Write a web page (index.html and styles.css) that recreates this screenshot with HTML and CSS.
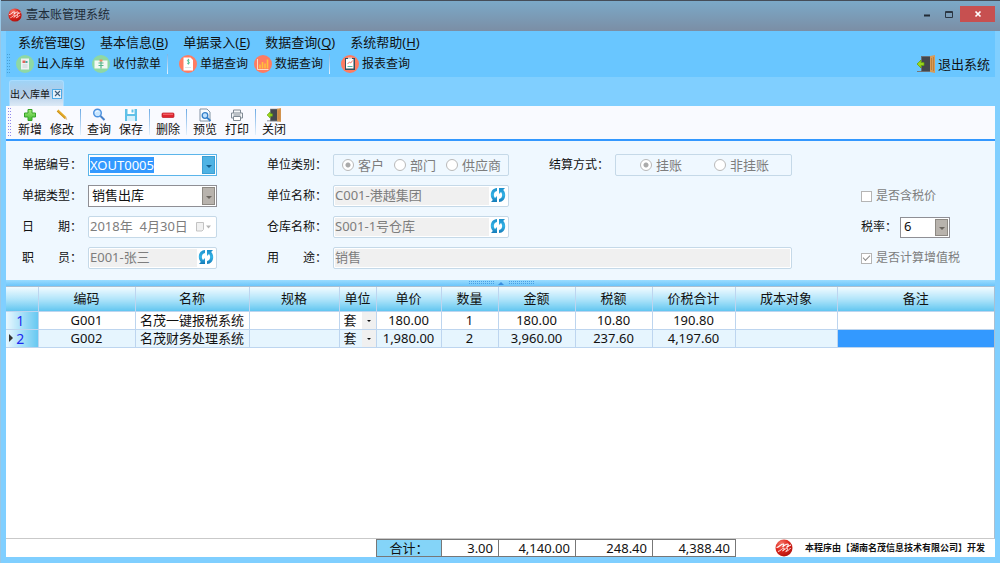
FILE: index.html
```html
<!DOCTYPE html>
<html lang="zh-CN">
<head>
<meta charset="utf-8">
<title>壹本账管理系统</title>
<link rel="stylesheet" href="styles.css">
</head>
<body>
<svg class="defs" aria-hidden="true">
  <defs>
    <radialGradient id="g-red" cx=".35" cy=".25" r=".8"><stop offset="0" stop-color="#f4786a"/><stop offset=".5" stop-color="#e02a20"/><stop offset="1" stop-color="#b0100c"/></radialGradient>
    <linearGradient id="g-blue" x1="0" y1="0" x2="0" y2="1"><stop offset="0" stop-color="#1c8fcb"/><stop offset=".5" stop-color="#35b4e6"/><stop offset="1" stop-color="#147ab8"/></linearGradient>
    <linearGradient id="g-green" x1="0" y1="0" x2="0" y2="1"><stop offset="0" stop-color="#a6ea7c"/><stop offset="1" stop-color="#3fba2e"/></linearGradient>
    <symbol id="i-logo" viewBox="0 0 18 18">
      <circle cx="9" cy="9" r="8.500" fill="url(#g-red)"/>
      <path d="M1.500 8.500C4 8.500 6 4.500 8.500 5c.8.500 0 2-1 3C10 6 12 4.500 13 5.200c.8.800-.500 2.300-1.500 3.300 1.500-1 3-2 4.500-2.500" fill="none" stroke="#fff" stroke-width="1.100"/>
      <path d="M3 12.500c2.500-.5 4.500-3.500 6-3.500.8.500-.500 2-1.500 3 2-1.500 4-3 5-2.500.8.800-.800 2.300-1.800 3 2-.5 3.800-2 5-3.500" fill="none" stroke="#ffe3df" stroke-width="1"/>
    </symbol>
    <symbol id="i-door" viewBox="0 0 18 18">
      <path d="M0 16.500h16" stroke="#777" stroke-width="1"/>
      <path d="M4 1h10v16H4z" fill="#6a6f74"/><path d="M5 2h8v14H5z" fill="#43474d"/>
      <path d="M13 1l5-1v18l-5-1z" fill="#d99b57"/><path d="M14.500 3v12M16.500 2v14" stroke="#b97834" stroke-width=".8"/>
      <path d="M0 9l4-4v2.500h3v3H4V13z" fill="#9bd51a" stroke="#5f9d0a" stroke-width=".7"/>
    </symbol>
    <symbol id="i-refresh" viewBox="0 0 16 16">
      <path d="M7 1C3.200 1.300.8 4 .8 7.800c0 2 .7 3.800 2 5.200L1 15h6V9L5 11c-.8-.9-1.100-2-1.100-3.200C3.900 5.800 5 4.500 7 4z" fill="url(#g-blue)"/>
      <path d="M9 15c3.800-.3 6.200-3 6.200-6.800 0-2-.7-3.800-2-5.200L15 1H9v6l2-2c.8.900 1.100 2 1.100 3.200 0 2-1.100 3.300-3.100 3.800z" fill="url(#g-blue)"/>
    </symbol>
  </defs>
</svg>
<div class="window">
  <header class="titlebar">
    <svg class="title-logo"><use href="#i-logo"/></svg>
    <h1 class="title">壹本账管理系统</h1>
    <div class="window-buttons">
      <button class="win-btn" type="button" aria-label="最小化"><svg width="8" height="8"><path d="M1 5.500h6" stroke="#222b35" stroke-width="2"/></svg></button>
      <button class="win-btn" type="button" aria-label="最大化"><svg width="8" height="7"><path d="M.5 .5h7v6h-7zM.5 1.500h7" fill="none" stroke="#2c3743"/></svg></button>
      <button class="win-btn win-close" type="button" aria-label="关闭窗口"><svg width="8" height="8"><path d="M1.500 1.500l5 5M6.500 1.500l-5 5" stroke="#fff" stroke-width="1.700"/></svg></button>
    </div>
  </header>

  <div class="frame">
    <div class="top">
      <nav class="menu">
        <button type="button">系统管理(<u>S</u>)</button>
        <button type="button">基本信息(<u>B</u>)</button>
        <button type="button">单据录入(<u>E</u>)</button>
        <button type="button">数据查询(<u>Q</u>)</button>
        <button type="button">系统帮助(<u>H</u>)</button>
      </nav>
      <div class="shortcuts">
        <span class="grip"></span>
        <button type="button"><svg viewBox="0 0 18 18"><circle cx="9" cy="9" r="9" fill="#8ed8a4"/><path d="M5 3.500h8v11H5z" fill="#eef1f2"/><path d="M6.500 5.500h3v2.500h-3z" fill="#e0665a"/><path d="M9.500 6h2v2h-2z" fill="#4aa7a0"/><path d="M6.500 10h5M6.500 12h5" stroke="#c9d2d4"/></svg>出入库单</button>
        <button type="button"><svg viewBox="0 0 18 18"><circle cx="9" cy="9" r="9" fill="#8ed8a4"/><path d="M2.500 5.500h13v8h-13z" fill="#f5f8f4"/><path d="M9 5v8.500" stroke="#39a97a"/><path d="M6.500 8h5M6.500 10.500h5" stroke="#58b68b"/><path d="M7.500 4.500h3v2h-3z" fill="#ef8b65"/></svg>收付款单</button>
        <span class="divider"></span>
        <button type="button"><svg viewBox="0 0 18 18"><circle cx="9" cy="9" r="9" fill="#ff7c62"/><path d="M4.500 2.500h7l2.500 2.500v10.500H4.500z" fill="#fff"/><path d="M10.500 5.200C10 4.400 8.300 4.500 8.400 5.700c.1 1 2.100.8 2.100 2S8.600 9 8 8M9.400 3.800v5.700" fill="none" stroke="#3bb98e" stroke-width=".8"/><path d="M6 12.500h6" stroke="#dfe4e8"/></svg>单据查询</button>
        <button type="button"><svg viewBox="0 0 18 18"><circle cx="9" cy="9" r="9" fill="#ff7c62"/><path d="M3.500 4v10.500h11" fill="none" stroke="#ffd9c2"/><path d="M6 13.500V9.500M8.500 13.500V7M11 13.500V8.500M13.500 13.500V4.500" stroke="#ffc13b" stroke-width="1.600"/></svg>数据查询</button>
        <span class="divider"></span>
        <button type="button"><svg viewBox="0 0 18 18"><circle cx="9" cy="9" r="9" fill="#ff7c62"/><path d="M4 3h10v12H4z" fill="#35505f"/><path d="M5 4h7.500v9.500H5z" fill="#fff"/><path d="M7 2.500h4v1.500H7z" fill="#d5dce0"/><path d="M6.500 9l2-2 1.200 1 2-2.500" fill="none" stroke="#ef6a5a" stroke-width=".9"/><path d="M6.500 11.500h5" stroke="#54b7a5"/></svg>报表查询</button>
        <button class="exit" type="button"><svg><use href="#i-door"/></svg>退出系统</button>
      </div>
    </div>

    <div class="tabs">
      <div class="tab"><span>出入库单</span><button type="button" aria-label="关闭标签"><svg width="7" height="7"><path d="M1 1l5 5M6 1L1 6" stroke="#3c5a78" stroke-width="1.100"/></svg></button></div>
    </div>

    <div class="toolbar">
      <span class="grip grip-violet"></span>
      <button type="button"><svg viewBox="0 0 14 14"><path d="M5 1.500h4V5h3.500v4H9v3.500H5V9H1.500V5H5z" fill="url(#g-green)" stroke="#36a429" stroke-linejoin="round"/></svg>新增</button>
      <button type="button"><svg viewBox="0 0 14 14"><path d="M2.500 2.500l8 7.500" stroke="#e3aa28" stroke-width="2.400"/><path d="M2.200 3.200l7.800 7.300" stroke="#b77d17" stroke-width=".6"/><path d="M9.700 10.800l1.600-1.700 1 3z" fill="#d9b889"/></svg>修改</button>
      <span class="divider"></span>
      <button type="button"><svg viewBox="0 0 14 14"><circle cx="5.500" cy="5" r="3.800" fill="#c8e6ff" stroke="#4c91df" stroke-width="1.400"/><path d="M8.500 8l4 4" stroke="#4781c9" stroke-width="2"/><path d="M3.500 4.500c.5-1.500 2-1.800 3-1.200" fill="none" stroke="#fff"/></svg>查询</button>
      <button type="button"><svg viewBox="0 0 14 14"><path d="M1 1h12v12H1z" fill="#60c1e8"/><path d="M3.500 1h7v5h-7z" fill="#fff"/><path d="M7.500 1.500h2v3h-2z" fill="#60c1e8"/><path d="M3 8h8v5H3z" fill="#d5f0fb"/></svg>保存</button>
      <span class="divider"></span>
      <button type="button"><svg viewBox="0 0 14 14"><rect x="1" y="5" width="12" height="4.500" rx="1" fill="#df2730" stroke="#bb1822" stroke-width=".7"/><path d="M2 6.200h10" stroke="#fa777b"/></svg>删除</button>
      <span class="divider"></span>
      <button type="button"><svg viewBox="0 0 14 14"><path d="M2 1h7l3 3v9H2z" fill="#f7fbff" stroke="#8293a4"/><circle cx="7" cy="7.500" r="2.800" fill="#c0e2ff" stroke="#347fc8" stroke-width="1.300"/><path d="M9 9.500l3.500 3.500" stroke="#347fc8" stroke-width="1.800"/></svg>预览</button>
      <button type="button"><svg viewBox="0 0 14 14"><path d="M3.500 5V2h7v3M3.500 10h-2V5h11v5h-2" fill="#f4f6f8" stroke="#808a94"/><path d="M3.500 8.500h7v4h-7zM3.500 7h7" fill="#fff" stroke="#808a94"/></svg>打印</button>
      <span class="divider"></span>
      <button type="button"><svg><use href="#i-door"/></svg>关闭</button>
    </div>

    <form class="form">
      <label class="label c1 r1" for="no">单据编号：</label>
      <div class="combo combo-active c2 r1"><input id="no" class="selected-text" type="text" value="XOUT0005"></div>
      <label class="label c1 r2" for="type">单据类型：</label>
      <div class="combo c2 r2"><select id="type"><option>销售出库</option></select></div>
      <label class="label c1 r3" for="date">日　　期：</label>
      <div class="date c2 r3"><input id="date" type="text" value="2018年  4月30日" disabled><svg width="17" height="10"><path d="M1.500 .5h7v7l-1.500 1.500h-5.500z" fill="#f1f1f1" stroke="#c3c3c3"/><path d="M11 3.500h5l-2.500 3z" fill="#b5b5b5"/></svg></div>
      <label class="label c1 r4" for="staff">职　　员：</label>
      <div class="lookup c2 r4"><input id="staff" type="text" value="E001-张三" disabled><button type="button" aria-label="刷新职员"><svg><use href="#i-refresh"/></svg></button></div>

      <span class="label c4 r1" id="kind-label">单位类别：</span>
      <div class="radios c5 r1" role="radiogroup" aria-labelledby="kind-label">
        <label><input type="radio" name="kind" checked disabled>客户</label>
        <label><input type="radio" name="kind" disabled>部门</label>
        <label><input type="radio" name="kind" disabled>供应商</label>
      </div>
      <label class="label c4 r2" for="unit">单位名称：</label>
      <div class="lookup c5 r2"><input id="unit" type="text" value="C001-港越集团" disabled><button type="button" aria-label="刷新单位"><svg><use href="#i-refresh"/></svg></button></div>
      <label class="label c4 r3" for="store">仓库名称：</label>
      <div class="lookup c5 r3"><input id="store" type="text" value="S001-1号仓库" disabled><button type="button" aria-label="刷新仓库"><svg><use href="#i-refresh"/></svg></button></div>
      <label class="label c4 r4" for="use">用　　途：</label>
      <div class="lookup wide r4"><input id="use" type="text" value="销售" disabled></div>

      <span class="label c7 r1" id="pay-label">结算方式：</span>
      <div class="radios radios-pay c8 r1" role="radiogroup" aria-labelledby="pay-label">
        <label><input type="radio" name="pay" checked disabled>挂账</label>
        <label><input type="radio" name="pay" disabled>非挂账</label>
      </div>

      <label class="check c10 r2"><input type="checkbox" disabled>是否含税价</label>
      <div class="rate c10 r3"><label for="rate">税率：</label><div class="combo"><select id="rate"><option>6</option></select></div></div>
      <label class="check c10 r4"><input type="checkbox" checked disabled>是否计算增值税</label>
    </form>

    <div class="splitter"><i></i><b></b><i></i></div>

    <main class="grid">
      <table class="items">
        <colgroup><col class="w-row"><col class="w-code"><col class="w-name"><col class="w-spec"><col class="w-unit"><col class="w-price"><col class="w-qty"><col class="w-sum"><col class="w-tax"><col class="w-total"><col class="w-cost"><col></colgroup>
        <thead><tr><th></th><th>编码</th><th>名称</th><th>规格</th><th>单位</th><th>单价</th><th>数量</th><th>金额</th><th>税额</th><th>价税合计</th><th>成本对象</th><th>备注</th></tr></thead>
        <tbody>
          <tr><th scope="row">1</th><td>G001</td><td>名茂一键报税系统</td><td></td><td><div class="unit"><select aria-label="单位"><option>套</option></select></div></td><td>180.00</td><td>1</td><td>180.00</td><td>10.80</td><td>190.80</td><td></td><td></td></tr>
          <tr class="current"><th scope="row">2</th><td>G002</td><td>名茂财务处理系统</td><td></td><td><div class="unit"><select aria-label="单位"><option>套</option></select></div></td><td>1,980.00</td><td>2</td><td>3,960.00</td><td>237.60</td><td>4,197.60</td><td></td><td class="active-cell"></td></tr>
        </tbody>
      </table>
    </main>

    <footer class="footer">
      <div class="totals">
        <span class="total-label">合计：</span><output class="t-qty">3.00</output><output class="t-sum">4,140.00</output><output class="t-tax">248.40</output><output class="t-total">4,388.40</output>
      </div>
      <div class="credit"><svg><use href="#i-logo"/></svg><span>本程序由【湖南名茂信息技术有限公司】开发</span></div>
    </footer>
  </div>
</div>
</body>
</html>
```
FILE: styles.css
```css
* { box-sizing: border-box; }

body {
  margin: 0;
  font: 12px/16px "Noto Sans", "Noto Sans CJK SC", sans-serif;
  color: #111;
}

button, input, select {
  margin: 0;
  padding: 0;
  border: 0;
  background: none;
  font: inherit;
  color: inherit;
}

svg { display: block; flex: none; }
.defs { position: absolute; width: 0; height: 0; }

.window {
  display: flex;
  flex-direction: column;
  min-height: 100vh;
  background: #80cfff;
  border-left: 1px solid #98c7e6;
}

/* Title bar */
.titlebar {
  display: flex;
  align-items: center;
  height: 31px;
  padding: 0 0 2px 7px;
  border-top: 1px solid #454d58;
  background: linear-gradient(#7ba9c8, #7b8ea5);
}
.title-logo { width: 14px; height: 14px; }
.title { flex: 1; margin: 0 0 0 4px; font-size: 12px; font-weight: 400; color: #202c38; }
.window-buttons { display: flex; align-self: flex-start; margin: 5px 5px 0 0; }
.win-btn { display: grid; place-items: center; width: 22px; height: 16px; }
.win-close { width: 35px; background: #c75050; }

.frame {
  flex: 1;
  display: flex;
  flex-direction: column;
  padding: 0 5px 6px;
}

/* Menu and shortcuts */
.top { background: #69c6ff; padding-top: 2px; }
.menu { display: flex; gap: 15px; padding-left: 12px; font-size: 13px; line-height: 18px; }
.menu u { text-underline-offset: 2px; }
.shortcuts { display: flex; align-items: center; gap: 6px; height: 26px; }
.shortcuts button { display: flex; align-items: center; gap: 3px; white-space: nowrap; }
.shortcuts svg { width: 18px; height: 18px; }
.shortcuts .divider { margin-right: 5px; }
.shortcuts .grip + button { margin-right: 1px; }
.shortcuts .exit { margin-left: auto; margin-right: 5px; font-size: 13px; }
.grip {
  width: 4px;
  height: 20px;
  background: conic-gradient(#4a9fd4 25%, transparent 0) 0 0 / 2px 3px;
}
.divider {
  width: 1px;
  height: 20px;
  background: linear-gradient(#7fb4e4, #e3f2ff);
}

/* Tabs */
.tabs { display: flex; align-items: flex-end; height: 29px; padding-left: 3px; }
.tab {
  display: flex;
  align-items: center;
  gap: 2px;
  height: 26px;
  padding: 0 1px 0 0;
  border: 1px solid #a9dcff;
  border-bottom: 0;
  border-radius: 3px 3px 0 0;
  background: linear-gradient(#9fd3f6, #b2cce6 50%, #ddeaf7);
  font-size: 10px;
}
.tab button { display: grid; place-items: center; width: 10px; height: 10px; border: 1px solid #4dabe8; background: #e5f2fc; }

/* Toolbar */
.toolbar {
  display: flex;
  align-items: flex-start;
  height: 35px;
  padding: 2px 0 0 1px;
  background: #f9faff;
  border-bottom: 2px solid #3398ff;
}
.toolbar button { display: flex; flex-direction: column; align-items: center; width: 32px; line-height: 16px; }
.toolbar svg { width: 14px; height: 14px; }
.toolbar .divider { height: 26px; margin: 1px 2px 0; background: linear-gradient(#6ba9e4, #e5f1fc); }
.grip-violet { height: 30px; margin-right: 3px; background-image: conic-gradient(#8f86ec 25%, transparent 0); }

/* Form */
.form {
  display: grid;
  grid-template-columns: 66px 129px 50px 66px 176px 40px 66px 177px 1fr 100px;
  grid-auto-rows: 22px;
  row-gap: 9px;
  padding: 13px 34px 11px 16px;
  background: #eff8ff;
}
.c1 { grid-column: 1; }
.c2 { grid-column: 2; }
.c4 { grid-column: 4; }
.c5 { grid-column: 5; }
.c7 { grid-column: 7; }
.c8 { grid-column: 8; }
.c10 { grid-column: 10; }
.wide { grid-column: 5 / 9; }
.r1 { grid-row: 1; }
.r2 { grid-row: 2; }
.r3 { grid-row: 3; }
.r4 { grid-row: 4; }

.label { align-self: center; white-space: nowrap; }

.combo {
  position: relative;
  border: 1px solid #8f8f95;
  background: #fff;
  font-size: 13px;
}
.combo input, .combo select { display: block; width: 100%; height: 100%; appearance: none; outline: 0; }
.combo select { padding: 0 0 2px 3px; }
.combo::before, .unit::before {
  content: "";
  position: absolute;
  top: 1px;
  right: 1px;
  bottom: 1px;
  width: 11px;
  border: 1px solid #8d8983;
  background: #b8b3ad;
  pointer-events: none;
}
.combo::after, .unit::after {
  content: "";
  position: absolute;
  top: 50%;
  right: 4px;
  border: 3px solid transparent;
  border-top-color: #6a655f;
  border-bottom: 0;
  pointer-events: none;
}
.combo-active { border-color: #5bb5ea; }
.combo-active::before { border-color: #3d9fd3; background: #4fb3e4; }
.combo-active::after { border-top-color: #14608f; }
.combo .selected-text {
  padding: 0 0 1px 1px;
  color: #fff;
  background: linear-gradient(#3399ff, #3399ff) no-repeat 1px 50% / 64px 16px;
}

.date, .lookup, .radios {
  display: flex;
  align-items: center;
  border: 1px solid #c5d9e8;
  border-radius: 2px;
  font-size: 13px;
  color: #7d7d7d;
}
.date { background: #fff; padding-right: 4px; }
.date input { flex: 1; min-width: 0; height: 100%; padding: 0 0 3px 1px; white-space: pre; }
.lookup { background: #fff; padding: 1px; }
.lookup input { flex: 1; min-width: 0; height: 100%; padding-bottom: 3px; background: #f0f0f0; }
.lookup button { display: grid; justify-items: center; align-self: flex-start; width: 18px; }
.lookup svg { width: 16px; height: 16px; }

.radios { gap: 10px; padding-left: 8px; }
.radios-pay { gap: 32px; padding-left: 24px; }
.radios label, .check { display: flex; align-items: center; gap: 4px; white-space: nowrap; }
.radios input {
  appearance: none;
  width: 12px;
  height: 12px;
  border: 1px solid #b9b9b9;
  border-radius: 50%;
  background: #fff;
}
.radios input:checked { background: radial-gradient(circle, #aaa 2px, #fff 3px); }
.check { color: #7d7d7d; }
.check input {
  appearance: none;
  display: grid;
  place-items: center;
  width: 11px;
  height: 11px;
  border: 1px solid #b5b5b5;
  background: #fff;
}
.check input:checked::before {
  content: "";
  width: 6px;
  height: 3px;
  margin-bottom: 2px;
  border: solid #8d8d8d;
  border-width: 0 0 1px 1px;
  transform: rotate(-45deg);
}
.rate { display: flex; align-items: center; justify-content: space-between; padding-right: 11px; }
.rate .combo { width: 50px; height: 21px; }

/* Splitter */
.splitter {
  display: flex;
  align-items: center;
  justify-content: center;
  gap: 4px;
  height: 6px;
  background: linear-gradient(#9bdcff, #6cc5fa);
}
.splitter i { width: 26px; height: 4px; background: conic-gradient(#4b9ee4 25%, transparent 0) 0 0 / 2px 2px; }
.splitter b { border: 3px solid transparent; border-bottom-color: #3a8fe0; border-top: 0; }

/* Item grid */
.grid { flex: 1; background: #fff; border: 1px solid #a9bfd2; border-left: 0; border-bottom-color: #c9c9c9; }
.items { width: 100%; table-layout: fixed; border-collapse: collapse; font-size: 13px; text-align: center; line-height: 17px; }
.w-row { width: 32px; }
.w-code { width: 97px; }
.w-name { width: 114px; }
.w-spec { width: 90px; }
.w-unit { width: 37px; }
.w-price { width: 65px; }
.w-qty { width: 57px; }
.w-sum { width: 77px; }
.w-tax { width: 77px; }
.w-total { width: 83px; }
.w-cost { width: 102px; }
.items th, .items td { height: 18px; padding: 0; border: 1px solid #bdd5ef; border-left: 0; white-space: nowrap; }
.items th { font-weight: 400; }
.items thead th { height: 24px; border-top: 0; background: linear-gradient(#f2fbff, #b2e5fa 50%, #62c6f0); }
.items tbody th { position: relative; padding-right: 3px; color: #1c2bf0; font-size: 14px; background: linear-gradient(90deg, #e9f8ff, #66c8f1); }
.items th:last-child, .items td:last-child { border-right: 0; }
.current td { background: #e6f5fe; }
.current th::before {
  content: "";
  position: absolute;
  left: 3px;
  top: 4px;
  border: 4px solid transparent;
  border-left-color: #333;
  border-right: 0;
}
.items .active-cell { background: #3399ff; }
.unit { position: relative; height: 17px; }
.unit select { display: block; width: 100%; height: 17px; padding-left: 4px; appearance: none; }
.unit::before { top: 0; right: 0; bottom: 0; width: 14px; border: 0; background: #f0f0f0; }
.unit::after { right: 5px; border-width: 2px 2px 0; border-top-color: #111; }

/* Footer */
.footer { display: flex; justify-content: space-between; align-items: center; padding-left: 370px; background: #fff; }
.totals { display: flex; font-size: 13px; line-height: 16px; border: 1px solid #777; border-left-width: 0; }
.totals > * { padding-right: 5px; border-left: 1px solid #777; text-align: right; }
.totals .total-label { width: 65px; padding-right: 0; background: #84d4f8; text-align: center; }
.t-qty { width: 57px; }
.t-sum { width: 77px; }
.t-tax { width: 77px; }
.t-total { width: 83px; }
.credit { display: flex; align-items: center; gap: 12px; padding-right: 10px; font-size: 9px; font-weight: 600; white-space: nowrap; }
.credit svg { width: 18px; height: 18px; }
```
